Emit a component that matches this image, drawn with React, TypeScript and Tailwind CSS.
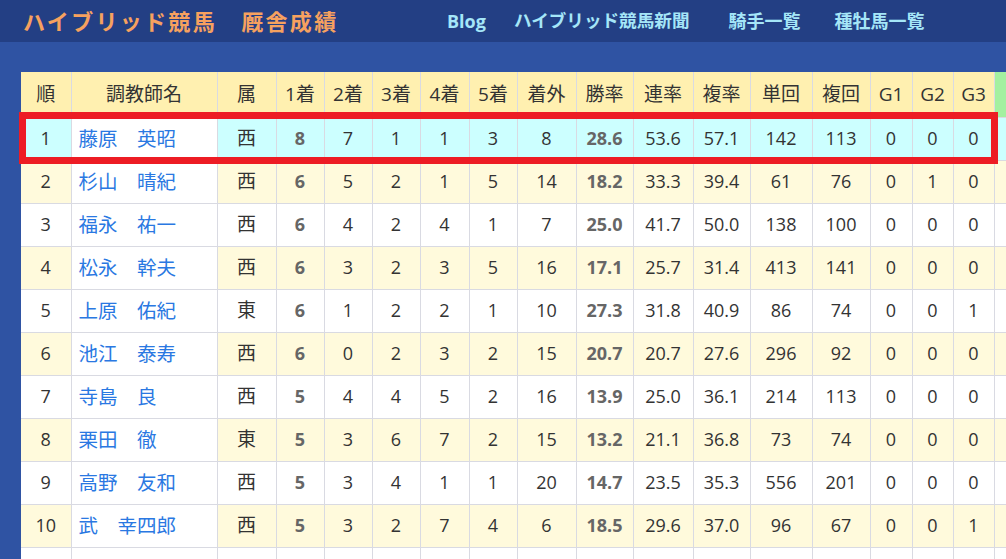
import React from "react";

type Row = {
  rank: number;
  name: string;
  area: string;
  p: number[];
  win: string;
  ren: string;
  fuku: string;
  tan: number;
  fukukai: number;
  g: number[];
};

const rows: Row[] = [
  { rank: 1, name: "藤原　英昭", area: "西", p: [8, 7, 1, 1, 3, 8], win: "28.6", ren: "53.6", fuku: "57.1", tan: 142, fukukai: 113, g: [0, 0, 0] },
  { rank: 2, name: "杉山　晴紀", area: "西", p: [6, 5, 2, 1, 5, 14], win: "18.2", ren: "33.3", fuku: "39.4", tan: 61, fukukai: 76, g: [0, 1, 0] },
  { rank: 3, name: "福永　祐一", area: "西", p: [6, 4, 2, 4, 1, 7], win: "25.0", ren: "41.7", fuku: "50.0", tan: 138, fukukai: 100, g: [0, 0, 0] },
  { rank: 4, name: "松永　幹夫", area: "西", p: [6, 3, 2, 3, 5, 16], win: "17.1", ren: "25.7", fuku: "31.4", tan: 413, fukukai: 141, g: [0, 0, 0] },
  { rank: 5, name: "上原　佑紀", area: "東", p: [6, 1, 2, 2, 1, 10], win: "27.3", ren: "31.8", fuku: "40.9", tan: 86, fukukai: 74, g: [0, 0, 1] },
  { rank: 6, name: "池江　泰寿", area: "西", p: [6, 0, 2, 3, 2, 15], win: "20.7", ren: "20.7", fuku: "27.6", tan: 296, fukukai: 92, g: [0, 0, 0] },
  { rank: 7, name: "寺島　良", area: "西", p: [5, 4, 4, 5, 2, 16], win: "13.9", ren: "25.0", fuku: "36.1", tan: 214, fukukai: 113, g: [0, 0, 0] },
  { rank: 8, name: "栗田　徹", area: "東", p: [5, 3, 6, 7, 2, 15], win: "13.2", ren: "21.1", fuku: "36.8", tan: 73, fukukai: 74, g: [0, 0, 0] },
  { rank: 9, name: "高野　友和", area: "西", p: [5, 3, 4, 1, 1, 20], win: "14.7", ren: "23.5", fuku: "35.3", tan: 556, fukukai: 201, g: [0, 0, 0] },
  { rank: 10, name: "武　幸四郎", area: "西", p: [5, 3, 2, 7, 4, 6], win: "18.5", ren: "29.6", fuku: "37.0", tan: 96, fukukai: 67, g: [0, 0, 1] },
];

const heads = ["1着", "2着", "3着", "4着", "5着", "着外"];

const cell = "border border-[#d9dae2] text-center";
const th = `${cell} font-normal border-t-0 text-[19px]`;
const thick = "border-l border-l-[#8a8a8a]";

export default function App() {
  return (
    <div
      className="w-[1006px] h-[559px] overflow-hidden bg-[#2f53a3]"
      style={{ fontFamily: '"Open Sans", "Noto Sans CJK JP", sans-serif' }}
    >
      {/* NAV */}
      <div className="h-[42px] bg-[#233f84] flex items-center pl-[23px]">
        <div className="text-[22px] font-bold tracking-[2.3px] text-[#f6a15f] w-[424px] leading-none">
          ハイブリッド競馬　厩舎成績
        </div>
        <div className="flex text-[18px] font-bold text-[#a5e6f8] leading-none">
          <span className="mr-[28px]">Blog</span>
          <span className="mr-[39px] text-[17.6px]">ハイブリッド競馬新聞</span>
          <span className="mr-[34px]">騎手一覧</span>
          <span>種牡馬一覧</span>
        </div>
      </div>

      {/* TABLE */}
      <div className="pt-[30px] pl-[21px]">
        <div className="relative w-[1060px]">
          <table className="table-fixed border-collapse w-[1060px] text-[18px] text-[#333]">
            <colgroup>
              <col className="w-[50px]" />
              <col className="w-[146px]" />
              <col className="w-[59px]" />
              <col className="w-[48px]" />
              <col className="w-[48px]" />
              <col className="w-[48px]" />
              <col className="w-[49px]" />
              <col className="w-[48px]" />
              <col className="w-[59px]" />
              <col className="w-[57px]" />
              <col className="w-[60px]" />
              <col className="w-[57px]" />
              <col className="w-[62px]" />
              <col className="w-[58px]" />
              <col className="w-[42px]" />
              <col className="w-[41px]" />
              <col className="w-[41px]" />
              <col className="w-[87px]" />
            </colgroup>
            <thead>
              <tr className="h-[45px] bg-[#fff0b0]">
                <th className={`${th} border-l-0`}>順</th>
                <th className={th}>調教師名</th>
                <th className={th}>属</th>
                {heads.map((h, i) => (
                  <th key={h} className={`${th} ${i === 0 ? thick : ""}`}>
                    {h}
                  </th>
                ))}
                <th className={`${th} ${thick}`}>勝率</th>
                <th className={th}>連率</th>
                <th className={th}>複率</th>
                <th className={th}>単回</th>
                <th className={th}>複回</th>
                <th className={`${th} ${thick}`}>G1</th>
                <th className={th}>G2</th>
                <th className={th}>G3</th>
                <th className={`${th} ${thick} bg-[#a4f0a0]`}></th>
              </tr>
            </thead>
            <tbody>
              {rows.map((r) => {
                const bg =
                  r.rank === 1 ? "bg-[#ccffff]" : r.rank % 2 === 0 ? "bg-[#fffadc]" : "bg-white";
                return (
                  <tr key={r.rank} className={`h-[43px] ${bg}`}>
                    <td className={`${cell} border-l-0`}>{r.rank}</td>
                    <td className={`${cell} bg-white text-left pl-[7px] text-[19.5px] text-[#2a78e2]`}>
                      {r.name}
                    </td>
                    <td className={`${cell} text-[19px]`}>{r.area}</td>
                    {r.p.map((v, i) => (
                      <td
                        key={i}
                        className={`${cell} ${i === 0 ? `${thick} font-bold text-[#666]` : ""}`}
                      >
                        {v}
                      </td>
                    ))}
                    <td className={`${cell} ${thick} font-bold text-[#666]`}>{r.win}</td>
                    <td className={cell}>{r.ren}</td>
                    <td className={cell}>{r.fuku}</td>
                    <td className={cell}>{r.tan}</td>
                    <td className={cell}>{r.fukukai}</td>
                    {r.g.map((v, i) => (
                      <td key={i} className={`${cell} ${i === 0 ? thick : ""}`}>
                        {v}
                      </td>
                    ))}
                    <td className={`${cell} ${thick}`}></td>
                  </tr>
                );
              })}
              <tr className="h-[43px] bg-white">
                {Array.from({ length: 18 }).map((_, i) => (
                  <td
                    key={i}
                    className={`${cell} ${i === 0 ? "border-l-0" : ""} ${
                      i === 3 || i === 9 || i === 14 || i === 17 ? thick : ""
                    }`}
                  >
                    &nbsp;
                  </td>
                ))}
              </tr>
            </tbody>
          </table>

          {/* highlight box over row 1 */}
          <div className="absolute left-[-2px] top-[40px] w-[979px] h-[52px] border-[7px] border-[#ed1c24] pointer-events-none" />
        </div>
      </div>
    </div>
  );
}
